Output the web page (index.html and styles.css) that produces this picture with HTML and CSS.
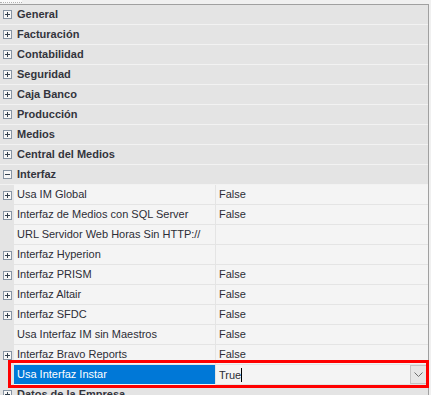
FILE: index.html
```html
<!DOCTYPE html>
<html>
<head>
<meta charset="utf-8">
<link rel="stylesheet" href="styles.css">
</head>
<body>
<div class="top"><div class="tab"></div></div>
<div class="grid">
  <div class="cat"><span class="gut"><span class="exp plus"></span></span><span class="name">General</span></div>
  <div class="cat"><span class="gut"><span class="exp plus"></span></span><span class="name">Facturación</span></div>
  <div class="cat"><span class="gut"><span class="exp plus"></span></span><span class="name">Contabilidad</span></div>
  <div class="cat"><span class="gut"><span class="exp plus"></span></span><span class="name">Seguridad</span></div>
  <div class="cat"><span class="gut"><span class="exp plus"></span></span><span class="name">Caja Banco</span></div>
  <div class="cat"><span class="gut"><span class="exp plus"></span></span><span class="name">Producción</span></div>
  <div class="cat"><span class="gut"><span class="exp plus"></span></span><span class="name">Medios</span></div>
  <div class="cat"><span class="gut"><span class="exp plus"></span></span><span class="name">Central del Medios</span></div>
  <div class="cat"><span class="gut"><span class="exp minus"></span></span><span class="name">Interfaz</span></div>

  <div class="prop"><span class="gut"><span class="exp plus"></span></span><span class="label">Usa IM Global</span><span class="val">False</span></div>
  <div class="prop"><span class="gut"><span class="exp plus"></span></span><span class="label">Interfaz de Medios con SQL Server</span><span class="val">False</span></div>
  <div class="prop"><span class="gut"></span><span class="label">URL Servidor Web Horas Sin HTTP://</span><span class="val"></span></div>
  <div class="prop"><span class="gut"><span class="exp plus"></span></span><span class="label">Interfaz Hyperion</span><span class="val"></span></div>
  <div class="prop"><span class="gut"><span class="exp plus"></span></span><span class="label">Interfaz PRISM</span><span class="val">False</span></div>
  <div class="prop"><span class="gut"><span class="exp plus"></span></span><span class="label">Interfaz Altair</span><span class="val">False</span></div>
  <div class="prop"><span class="gut"><span class="exp plus"></span></span><span class="label">Interfaz SFDC</span><span class="val">False</span></div>
  <div class="prop"><span class="gut"></span><span class="label">Usa Interfaz IM sin Maestros</span><span class="val">False</span></div>
  <div class="prop"><span class="gut"><span class="exp plus"></span></span><span class="label">Interfaz Bravo Reports</span><span class="val">False</span></div>
  <div class="prop selected"><span class="gut"></span><span class="label">Usa Interfaz Instar</span><span class="val edit"><span class="txt">True</span><span class="caret"></span><span class="drop"><svg width="9" height="5" viewBox="0 0 9 5"><path d="M0.5 0.5 L4.5 4.5 L8.5 0.5" fill="none" stroke="#6d6d6d" stroke-width="1"/></svg></span></span></div>

  <div class="cat"><span class="gut"><span class="exp plus"></span></span><span class="name">Datos de la Empresa</span></div>
</div>
<div class="mark"></div>
</body>
</html>
```

FILE: styles.css
```css
html, body {
  margin: 0;
  padding: 0;
  background: #f0f0f0;
  overflow: hidden;
  height: 395px;
}
body {
  position: relative;
  font-family: "Liberation Sans", Arial, sans-serif;
  font-size: 11px;
  color: #2c2d36;
}
.top {
  height: 4px;
  display: flex;
}
.tab {
  width: 22px;
  height: 3px;
  background: #fafafa;
  border-bottom: 1px dotted #b0b0b0;
  box-sizing: border-box;
}
.grid {
  width: 428px;
  border-top: 1px solid #a0a0a0;
  border-right: 1px solid #a0a0a0;
  background: #e4e4e4;
}
.cat {
  display: flex;
  height: 20px;
  box-sizing: border-box;
  border-bottom: 1px solid #f2f2f2;
  align-items: center;
  background: #e4e4e4;
}
.gut {
  width: 14px;
  flex: none;
  height: 100%;
  display: flex;
  align-items: center;
  padding-left: 3px;
  box-sizing: border-box;
  background: #e4e4e4;
}
.cat .gut { height: 19px; }
.name {
  padding-left: 3px;
  padding-bottom: 1px;
  font-weight: bold;
  color: #33343c;
  white-space: nowrap;
}
.exp {
  width: 9px;
  height: 9px;
  box-sizing: border-box;
  border: 1px solid #8794a3;
  background: #f7f7f7;
  position: relative;
}
.exp::before {
  content: "";
  position: absolute;
  left: 1px;
  top: 3px;
  width: 5px;
  height: 1px;
  background: #33404e;
}
.plus::after {
  content: "";
  position: absolute;
  left: 3px;
  top: 1px;
  width: 1px;
  height: 5px;
  background: #33404e;
}
.prop {
  display: flex;
  height: 20px;
}
.label, .val {
  height: 20px;
  box-sizing: border-box;
  border-bottom: 1px solid #e4e4e4;
  background: #f4f4f4;
  display: flex;
  align-items: center;
  white-space: nowrap;
  overflow: hidden;
  padding-bottom: 1px;
}
.label {
  width: 202px;
  border-right: 1px solid #e4e4e4;
  padding-left: 3px;
}
.val {
  flex: 1;
  padding-left: 3px;
}
.selected .label {
  background: #0078d7;
  color: #ffffff;
  border-bottom-color: #f4f4f4;
}
.edit {
  position: relative;
  padding-right: 1px;
  padding-bottom: 0;
}
.caret {
  width: 1px;
  height: 14px;
  background: #000;
}
.drop {
  margin-left: auto;
  width: 17px;
  height: 19px;
  box-sizing: border-box;
  border: 1px solid #c4c4c4;
  background: #e6e6e6;
  display: flex;
  align-items: center;
  justify-content: center;
}
.mark {
  position: absolute;
  left: 8px;
  top: 360px;
  width: 421px;
  height: 28px;
  box-sizing: border-box;
  border: 3px solid #ff0000;
}
```
